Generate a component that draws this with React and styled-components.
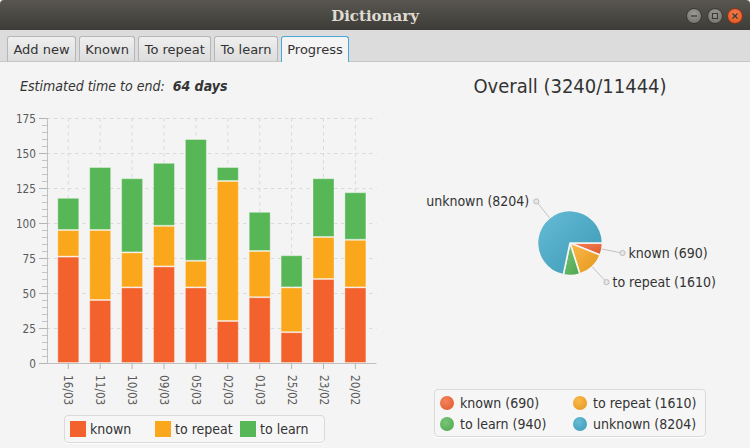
import React from "react";
import styled, { createGlobalStyle } from "styled-components";

const FONT = `"DejaVu Sans Condensed", "DejaVu Sans", sans-serif`;

const GlobalStyle = createGlobalStyle`
  html, body { margin: 0; padding: 0; }
  body {
    width: 750px;
    height: 448px;
    overflow: hidden;
    background: #f4f4f4;
    font-family: ${FONT};
    font-stretch: condensed;
    color: #333;
  }
`;

const COLORS = {
  known: "#f3622d",
  repeat: "#fba71b",
  learn: "#57b757",
  unknown: "#41a9c9",
};

const LIGHT = {
  known: "#f6835c",
  repeat: "#fcb94a",
  learn: "#78c678",
  unknown: "#66bcd6",
};

const DARK = {
  known: "#db5829",
  repeat: "#e2961a",
  learn: "#4ea54e",
  unknown: "#3a98b5",
};

// label, known, to repeat, to learn
const days = [
  ["16/03", 76, 19, 23],
  ["11/03", 45, 50, 45],
  ["10/03", 54, 25, 53],
  ["09/03", 69, 29, 45],
  ["05/03", 54, 19, 87],
  ["02/03", 30, 100, 10],
  ["01/03", 47, 33, 28],
  ["25/02", 22, 32, 23],
  ["23/02", 60, 30, 42],
  ["20/02", 54, 34, 34],
];

const overall = [
  { key: "known", name: "known", value: 690 },
  { key: "repeat", name: "to repeat", value: 1610 },
  { key: "learn", name: "to learn", value: 940 },
  { key: "unknown", name: "unknown", value: 8204 },
];

const Window = styled.div`
  width: 750px;
  height: 448px;
  display: flex;
  flex-direction: column;
`;

const TitleBar = styled.header`
  height: 30px;
  flex: none;
  display: grid;
  grid-template-columns: 1fr auto 1fr;
  align-items: center;
  background: linear-gradient(#58564f, #3d3c38);
  border-radius: 4px 4px 0 0;
`;

const Title = styled.div`
  grid-column: 2;
  font-family: "DejaVu Serif", serif;
  font-stretch: normal;
  font-weight: bold;
  font-size: 15px;
  color: #dfdbd2;
  padding-top: 1px;
`;

const Controls = styled.div`
  justify-self: end;
  display: flex;
  gap: 4.5px;
  padding: 2px 7px 0 0;
`;

const WinBtn = styled.div`
  width: 16px;
  height: 16px;
  box-sizing: border-box;
  border-radius: 50%;
  display: flex;
  align-items: center;
  justify-content: center;
  border: 1px solid ${(p) => (p.$close ? "#8a3512" : "#3a3935")};
  background: ${(p) =>
    p.$close
      ? "radial-gradient(circle at 50% 35%, #f47d4d, #e0501c)"
      : "radial-gradient(circle at 50% 35%, #9c9b96, #6c6b67)"};
`;

const TabBar = styled.nav`
  height: 32px;
  flex: none;
  box-sizing: border-box;
  display: flex;
  align-items: flex-end;
  gap: 3px;
  padding-left: 7px;
  background: #dcdcdc;
  border-bottom: 1px solid #c6c6c6;
`;

const Tab = styled.div`
  height: ${(p) => (p.$selected ? 26 : 25)}px;
  margin-bottom: ${(p) => (p.$selected ? -1 : 0)}px;
  box-sizing: border-box;
  display: flex;
  align-items: center;
  padding: 0 5.4px;
  font-family: "DejaVu Sans", sans-serif;
  font-stretch: normal;
  font-size: 13px;
  color: #333;
  border: 1px solid ${(p) => (p.$selected ? "#4aa8d8" : "#b6b6b6")};
  border-bottom: none;
  border-radius: 3px 3px 0 0;
  background: ${(p) =>
    p.$selected ? "#f4f4f4" : "linear-gradient(#efefef, #dddddd)"};
`;

const Content = styled.main`
  flex: 1;
  display: flex;
`;

const LeftPane = styled.section`
  width: 390px;
  flex: none;
  display: flex;
  flex-direction: column;
`;

const RightPane = styled.section`
  flex: 1;
  display: flex;
  flex-direction: column;
  align-items: center;
`;

const Estimate = styled.div`
  height: 43px;
  box-sizing: border-box;
  padding: 15px 0 0 20px;
  line-height: 18px;
  font-size: 14px;
  font-style: italic;
  display: flex;
  gap: 8px;
  color: #333;
  b {
    font-weight: bold;
  }
`;

const ChartTitle = styled.h2`
  margin: 0;
  padding-top: 12px;
  font-size: 20px;
  line-height: 24px;
  font-weight: normal;
  color: #333;
`;

const Legend = styled.div`
  display: grid;
  grid-template-columns: repeat(${(p) => p.$cols}, ${(p) => p.$tile}px);
  column-gap: 6px;
  row-gap: 4px;
  padding: ${(p) => p.$pad};
  width: fit-content;
  border: 1px solid #dadada;
  border-radius: 4px;
  background: #f6f6f6;
  box-shadow: 0 1px 0 #ffffff;
`;

const BarLegend = styled(Legend)`
  margin: 5px 0 0 64px;
`;

const PieLegend = styled(Legend)`
  margin-top: 5px;
`;

const LegendItem = styled.div`
  display: flex;
  align-items: center;
  gap: ${(p) => p.$gap}px;
  height: ${(p) => p.$h}px;
  font-size: 14px;
  white-space: nowrap;
`;

const Square = styled.span`
  width: 16px;
  height: 16px;
  flex: none;
  background: ${(p) => COLORS[p.$k]};
`;

const Dot = styled.span`
  width: 14px;
  height: 14px;
  flex: none;
  border-radius: 50%;
  background: radial-gradient(circle at 40% 35%, ${(p) => LIGHT[p.$k]}, ${(p) => DARK[p.$k]});
`;

const Y0 = 363;
const SCALE = 1.4;
const X0 = 47;
const X1 = 376.5;
const TOP = 118;
const cx = (i) => 68.3 + 31.9 * i;
const yv = (v) => Y0 - v * SCALE;

function BarChart() {
  const majors = [0, 25, 50, 75, 100, 125, 150, 175];
  const minors = [];
  for (let v = 5; v < 175; v += 5) if (v % 25) minors.push(v);
  return (
    <svg width="380" height="305" viewBox="0 105 380 305" style={{ display: "block" }}>
      {majors.slice(1).map((v) => (
        <line key={v} x1={X0} x2={X1} y1={yv(v) + 0.5} y2={yv(v) + 0.5}
          stroke="#dadada" strokeDasharray="3.5 3.5" />
      ))}
      {days.map((d, i) => (
        <line key={d[0]} x1={cx(i)} x2={cx(i)} y1={TOP} y2={Y0}
          stroke="#dadada" strokeDasharray="3.5 3.5" />
      ))}
      {days.map(([label, k, r, l], i) => {
        const x = cx(i) - 11;
        const parts = [["known", 0, k], ["repeat", k, k + r], ["learn", k + r, k + r + l]];
        return (
          <g key={label}>
            {parts.map(([key, a, b]) => (
              <rect key={key} x={x + 0.5} y={yv(b) + 0.5} width={21}
                height={(b - a) * SCALE - 1} fill={COLORS[key]}
                stroke="rgba(255,255,255,0.35)" strokeWidth="1" />
            ))}
          </g>
        );
      })}
      <line x1={X0 + 0.5} x2={X0 + 0.5} y1={TOP} y2={Y0} stroke="#c0c0c0" />
      {majors.map((v) => (
        <line key={v} x1={39} x2={X0} y1={yv(v) + 0.5} y2={yv(v) + 0.5} stroke="#b4b4b4" />
      ))}
      {minors.map((v) => (
        <line key={v} x1={42} x2={X0} y1={yv(v) + 0.5} y2={yv(v) + 0.5} stroke="#c4c4c4" />
      ))}
      {majors.map((v) => (
        <text key={v} x={36} y={yv(v) + 0.5} textAnchor="end" dominantBaseline="central"
          fontSize="11.7" fill="#5a5a5a">{v}</text>
      ))}
      <line x1={X0} x2={X1} y1={Y0 + 0.5} y2={Y0 + 0.5} stroke="#c0c0c0" />
      {days.map((d, i) => (
        <line key={d[0]} x1={cx(i)} x2={cx(i)} y1={Y0} y2={Y0 + 6} stroke="#b4b4b4" />
      ))}
      {days.map((d, i) => (
        <text key={d[0]} transform={`translate(${cx(i)} 375) rotate(90)`}
          dominantBaseline="central" fontSize="11.7" fill="#5a5a5a">{d[0]}</text>
      ))}
    </svg>
  );
}

const PCX = 570;
const PCY = 243;
const PR = 32.5;
const pt = (deg, r) => {
  const a = (deg * Math.PI) / 180;
  return [PCX + r * Math.cos(a), PCY + r * Math.sin(a)];
};

function PieChart() {
  const total = overall.reduce((s, d) => s + d.value, 0);
  let start = 0;
  const slices = overall.map((d) => {
    const sweep = (d.value / total) * 360;
    const s = { ...d, a0: start, a1: start + sweep, mid: start + sweep / 2 };
    start += sweep;
    return s;
  });
  const labelled = { known: "start", repeat: "start", unknown: "end" };
  return (
    <svg width="360" height="286" viewBox="390 98 360 286" style={{ display: "block" }}>
      <defs>
        {slices.map((s) => (
          <linearGradient key={s.key} id={`g-${s.key}`} x1="0" y1="0" x2="1" y2="1">
            <stop offset="0" stopColor={LIGHT[s.key]} />
            <stop offset="1" stopColor={DARK[s.key]} />
          </linearGradient>
        ))}
      </defs>
      {slices.map((s) => {
        const [x0, y0] = pt(s.a0, PR);
        const [x1, y1] = pt(s.a1, PR);
        const large = s.a1 - s.a0 > 180 ? 1 : 0;
        return (
          <path key={s.key}
            d={`M${PCX} ${PCY} L${x0} ${y0} A${PR} ${PR} 0 ${large} 1 ${x1} ${y1} Z`}
            fill={`url(#g-${s.key})`} stroke="#f4f4f4" strokeWidth="1.6" strokeLinejoin="round" />
        );
      })}
      {slices.filter((s) => labelled[s.key]).map((s) => {
        const [ax, ay] = pt(s.mid, PR);
        const [mx, my] = pt(s.mid, PR + 21);
        const anchor = labelled[s.key];
        return (
          <g key={s.key}>
            <line x1={ax} y1={ay} x2={mx} y2={my} stroke="#c2c2c2" />
            <circle cx={mx} cy={my} r="2.6" fill="#e6e6e6" stroke="#bdbdbd" />
            <text x={anchor === "end" ? mx - 7 : mx + 6} y={my} textAnchor={anchor}
              dominantBaseline="central" fontSize="14" fill="#333">
              {`${s.name} (${s.value})`}
            </text>
          </g>
        );
      })}
    </svg>
  );
}

function CloseGlyph() {
  return (
    <svg width="8" height="8" viewBox="0 0 8 8">
      <path d="M1.5 1.5 L6.5 6.5 M6.5 1.5 L1.5 6.5" stroke="#3c3b37" strokeWidth="1.3" />
    </svg>
  );
}

const tabs = ["Add new", "Known", "To repeat", "To learn", "Progress"];

export default function App() {
  return (
    <Window>
      <GlobalStyle />
      <TitleBar>
        <Title>Dictionary</Title>
        <Controls>
          <WinBtn>
            <svg width="8" height="8" viewBox="0 0 8 8">
              <path d="M1 4 H7" stroke="#3c3b37" strokeWidth="1.3" />
            </svg>
          </WinBtn>
          <WinBtn>
            <svg width="8" height="8" viewBox="0 0 8 8">
              <rect x="1.5" y="1.5" width="5" height="5" fill="none" stroke="#3c3b37" strokeWidth="1.1" />
            </svg>
          </WinBtn>
          <WinBtn $close>
            <CloseGlyph />
          </WinBtn>
        </Controls>
      </TitleBar>
      <TabBar>
        {tabs.map((t) => (
          <Tab key={t} $selected={t === "Progress"}>{t}</Tab>
        ))}
      </TabBar>
      <Content>
        <LeftPane>
          <Estimate>
            <span>Estimated time to end:</span>
            <b>64 days</b>
          </Estimate>
          <BarChart />
          <BarLegend $cols={3} $tile={79} $pad="5px 5px">
            <LegendItem $gap={4} $h={16}><Square $k="known" />known</LegendItem>
            <LegendItem $gap={4} $h={16}><Square $k="repeat" />to repeat</LegendItem>
            <LegendItem $gap={4} $h={16}><Square $k="learn" />to learn</LegendItem>
          </BarLegend>
        </LeftPane>
        <RightPane>
          <ChartTitle>Overall (3240/11444)</ChartTitle>
          <PieChart />
          <PieLegend $cols={2} $tile={127} $pad="4px 5px">
            {overall.map((d) => (
              <LegendItem key={d.key} $gap={6} $h={17}>
                <Dot $k={d.key} />
                {`${d.name} (${d.value})`}
              </LegendItem>
            ))}
          </PieLegend>
        </RightPane>
      </Content>
    </Window>
  );
}
